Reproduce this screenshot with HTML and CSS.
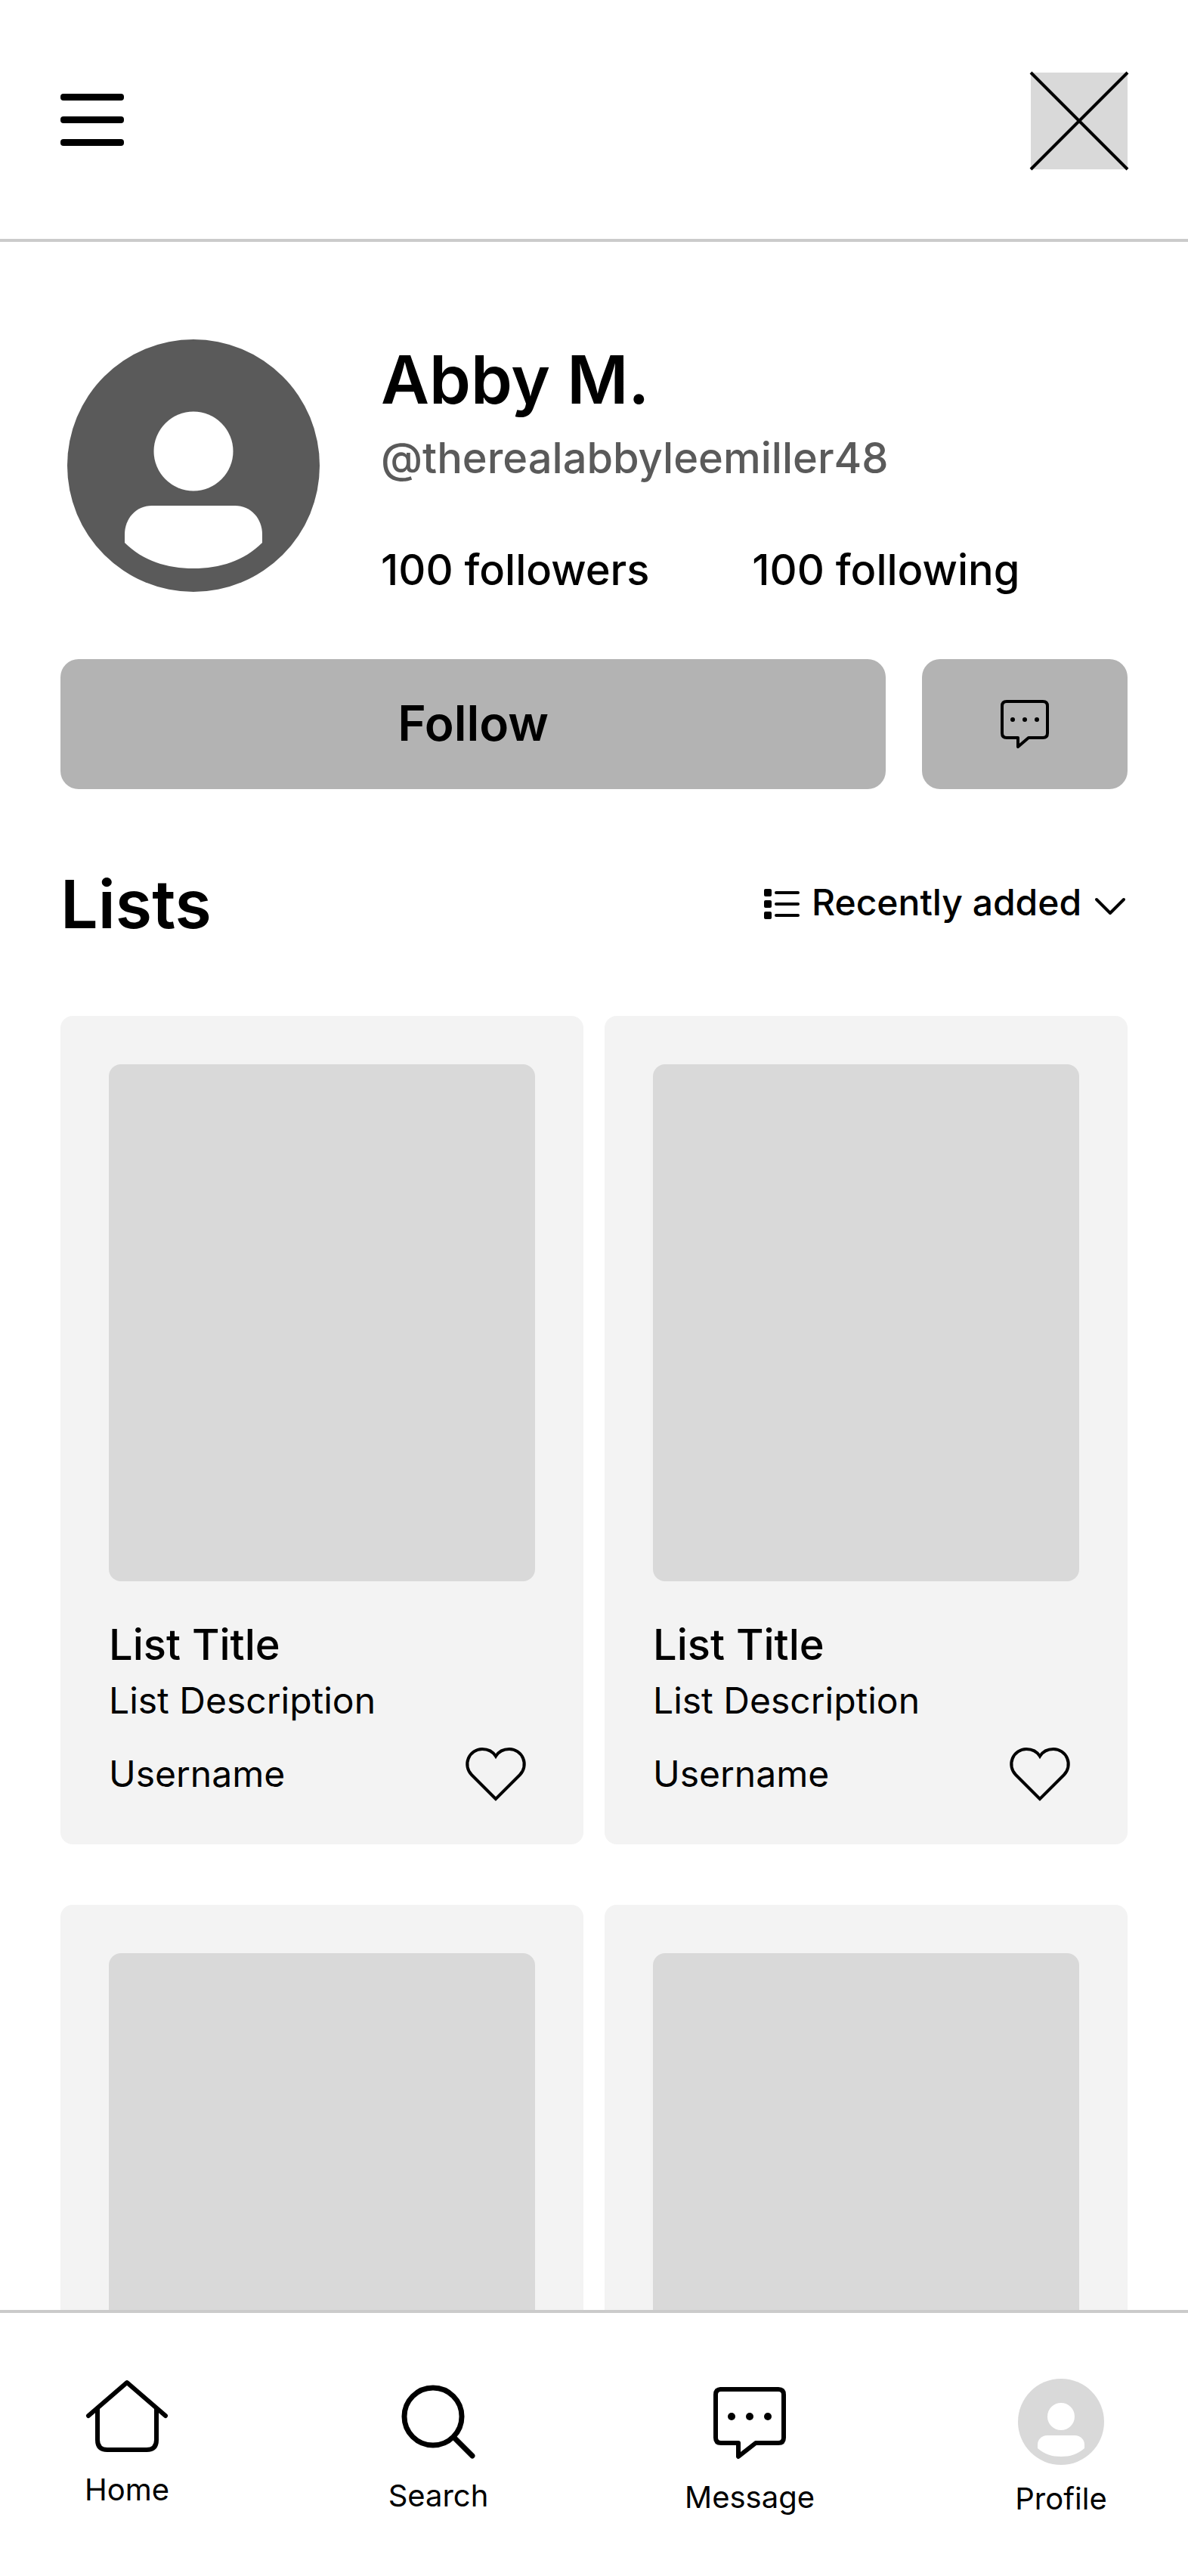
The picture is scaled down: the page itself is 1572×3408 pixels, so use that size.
FILE: index.html
```html
<!DOCTYPE html>
<html lang="en">
<head>
  <meta charset="UTF-8">
  <meta name="viewport" content="width=device-width, initial-scale=1.0">
  <title>Abby M.</title>
  <link rel="stylesheet" href="styles.css">
</head>
<body>
  <header class="topbar">
    <button class="menu-btn" aria-label="Open menu">
      <span></span>
      <span></span>
      <span></span>
    </button>
    <svg class="logo" viewBox="0 0 128 128" role="img" aria-label="Logo">
      <rect width="128" height="128" fill="#d9d9d9"/>
      <path d="M0 0L128 128M128 0L0 128" stroke="#000" stroke-width="4"/>
    </svg>
  </header>

  <main>
    <section class="profile">
      <svg class="avatar" viewBox="0 0 352 352" role="img" aria-label="Profile picture">
        <circle cx="176" cy="176" r="167" fill="#5a5a5a"/>
        <circle cx="176" cy="157" r="52.5" fill="#fff"/>
        <path d="M121 229H231C252 229 267 246 267 267V278C243 302 211 312 176 312C141 312 109 302 85 278V267C85 246 100 229 121 229Z" fill="#fff"/>
      </svg>
      <div class="info">
        <h1>Abby M.</h1>
        <p class="handle">@therealabbyleemiller48</p>
        <div class="stats">
          <a href="#followers">100 followers</a>
          <a href="#following">100 following</a>
        </div>
      </div>
    </section>

    <div class="actions">
      <button class="follow-btn">Follow</button>
      <button class="message-btn" aria-label="Send message">
        <svg width="64" height="64" viewBox="0 0 64 64" fill="none" stroke="#000" stroke-width="4">
          <path d="M8 2H56Q62 2 62 8V44Q62 50 56 50H37L23 62V50H8Q2 50 2 44V8Q2 2 8 2Z" stroke-linejoin="round"/>
          <g fill="#000" stroke="none">
            <circle cx="16" cy="26" r="3"/>
            <circle cx="32" cy="26" r="3"/>
            <circle cx="48" cy="26" r="3"/>
          </g>
        </svg>
      </button>
    </div>

    <section>
      <div class="lists-head">
        <h2>Lists</h2>
        <label class="sort">
          <svg width="48" height="48" viewBox="0 0 48 48">
            <rect x="1" y="4" width="10" height="10" rx="2"/>
            <rect x="1" y="19" width="10" height="10" rx="2"/>
            <rect x="1" y="34" width="10" height="10" rx="2"/>
            <path d="M17 9H46M17 24H46M17 39H46" stroke="#000" stroke-width="4" stroke-linecap="round"/>
          </svg>
          <select aria-label="Sort lists">
            <option>Recently added</option>
          </select>
          <svg width="44" height="48" viewBox="0 0 44 48">
            <path d="M3 18L21 36L39 18" fill="none" stroke="#000" stroke-width="4" stroke-linecap="round" stroke-linejoin="round"/>
          </svg>
        </label>
      </div>

      <div class="lists">
        <article class="card">
          <div class="cover"></div>
          <h3>List Title</h3>
          <p>List Description</p>
          <div class="card-foot">
            <span>Username</span>
            <button class="like-btn" aria-label="Like">
              <svg width="88" height="88" viewBox="0 0 88 88">
                <path d="M44 76L12 44A20 20 0 0 1 26 10C34 10 40 13 44 19.5C48 13 54 10 62 10A20 20 0 0 1 76 44Z" fill="none" stroke="#000" stroke-width="4"/>
              </svg>
            </button>
          </div>
        </article>
        <article class="card">
          <div class="cover"></div>
          <h3>List Title</h3>
          <p>List Description</p>
          <div class="card-foot">
            <span>Username</span>
            <button class="like-btn" aria-label="Like">
              <svg width="88" height="88" viewBox="0 0 88 88">
                <path d="M44 76L12 44A20 20 0 0 1 26 10C34 10 40 13 44 19.5C48 13 54 10 62 10A20 20 0 0 1 76 44Z" fill="none" stroke="#000" stroke-width="4"/>
              </svg>
            </button>
          </div>
        </article>
        <article class="card">
          <div class="cover"></div>
        </article>
        <article class="card">
          <div class="cover"></div>
        </article>
      </div>
    </section>
  </main>

  <nav class="tabbar">
    <a href="#home">
      <svg width="120" height="118" viewBox="0 0 120 118" fill="none" stroke="#000" stroke-width="6" stroke-linecap="round" stroke-linejoin="round">
        <path d="M9 56L60 12L111 56"/>
        <path d="M21 47V88Q21 101 34 101H86Q99 101 99 88V47"/>
      </svg>
      Home
    </a>
    <a href="#search">
      <svg width="120" height="126" viewBox="0 0 120 126" fill="none" stroke="#000" stroke-width="7" stroke-linecap="round">
        <circle cx="53" cy="57" r="38"/>
        <path d="M81 85L105 109"/>
      </svg>
      Search
    </a>
    <a href="#message">
      <svg width="120" height="128" viewBox="0 0 120 128" fill="none" stroke="#000" stroke-width="6">
        <path d="M21 21H98Q105 21 105 28V85Q105 92 98 92H68L45 110V92H22Q15 92 15 85V28Q15 21 22 21Z" stroke-linejoin="round"/>
        <g fill="#000" stroke="none">
          <circle cx="36" cy="57" r="5"/>
          <circle cx="60" cy="57" r="5"/>
          <circle cx="84" cy="57" r="5"/>
        </g>
      </svg>
      Message
    </a>
    <a href="#profile">
      <svg width="120" height="130" viewBox="0 0 120 130">
        <circle cx="60" cy="64" r="57" fill="#d9d9d9"/>
        <circle cx="60" cy="57" r="18" fill="#fff"/>
        <path d="M42 82H78C86 82 91 88 91 94V99C82 107 72 110 60 110C48 110 38 107 29 99V94C29 88 34 82 42 82Z" fill="#fff"/>
      </svg>
      Profile
    </a>
  </nav>
</body>
</html>
```

FILE: styles.css
```css
* {
  box-sizing: border-box;
}
body {
  font-family: Inter, sans-serif;
  font-optical-sizing: none;
  margin: 0;
  height: 100vh;
  display: flex;
  flex-direction: column;
  background-color: #fff;
  color: #000;
}
h1, h2, h3, p {
  margin: 0;
}
a {
  color: inherit;
  text-decoration: none;
}
button, select {
  font-family: inherit;
  color: inherit;
  border: none;
  padding: 0;
  background: none;
  cursor: pointer;
}
svg {
  display: block;
  flex-shrink: 0;
}

/* Top bar */
.topbar {
  display: flex;
  justify-content: space-between;
  align-items: center;
  padding: 96px 80px 92px;
  border-bottom: 4px solid #cbcbcb;
}
.menu-btn {
  display: flex;
  flex-direction: column;
  gap: 21px;
  padding-bottom: 4px;
}
.menu-btn span {
  width: 84px;
  height: 9px;
  border-radius: 4px;
  background-color: #000;
}
.logo {
  width: 128px;
  height: 128px;
  overflow: visible;
}

/* The page scrolls between the two bars */
main {
  flex: 1;
  min-height: 0;
  overflow-y: auto;
  scrollbar-width: none;
  padding: 120px 80px 80px;
}

/* Profile */
.profile {
  display: flex;
  gap: 72px;
}
.avatar {
  width: 352px;
  height: 352px;
}
.info {
  padding-top: 8px;
}
h1 {
  font-size: 88px;
  line-height: 108px;
  font-weight: 600;
}
.handle {
  margin-top: 16px;
  font-size: 56px;
  line-height: 68px;
  font-weight: 500;
  color: #5a5a5a;
}
.stats {
  display: flex;
  gap: 136px;
  margin-top: 80px;
  font-size: 56px;
  line-height: 68px;
  font-weight: 500;
}
.actions {
  display: flex;
  gap: 48px;
  margin-top: 80px;
}
.actions button {
  height: 172px;
  border-radius: 24px;
  background-color: #b3b3b3;
}
.follow-btn {
  flex: 1;
  padding-bottom: 4px;
  font-size: 64px;
  font-weight: 600;
}
.message-btn {
  width: 272px;
  display: flex;
  justify-content: center;
  align-items: center;
}

/* Lists */
.lists-head {
  display: flex;
  justify-content: space-between;
  align-items: center;
  margin: 100px 0 96px;
}
h2 {
  font-size: 88px;
  line-height: 104px;
  font-weight: 600;
}
.sort {
  display: flex;
  align-items: center;
  gap: 16px;
}
.sort select {
  appearance: none;
  padding-bottom: 4px;
  font-size: 48px;
  line-height: 60px;
  font-weight: 500;
}
.lists {
  display: grid;
  grid-template-columns: 1fr 1fr;
  gap: 80px 28px;
}
.card {
  padding: 64px 64px 48px;
  border-radius: 16px;
  background-color: #f3f3f3;
}
.cover {
  aspect-ratio: 47 / 57;
  border-radius: 16px;
  background-color: #d9d9d9;
}
.card h3 {
  margin-top: 48px;
  font-size: 56px;
  line-height: 72px;
  font-weight: 500;
}
.card p {
  margin-top: 8px;
  font-size: 48px;
  line-height: 60px;
}
.card-foot {
  display: flex;
  justify-content: space-between;
  align-items: center;
  margin-top: 24px;
  padding-right: 8px;
  font-size: 48px;
}
.card-foot span {
  padding-bottom: 4px;
}

/* Bottom navigation */
.tabbar {
  display: flex;
  justify-content: space-between;
  padding: 80px 80px 78px;
  border-top: 4px solid #cbcbcb;
}
.tabbar a {
  width: 176px;
  display: flex;
  flex-direction: column;
  align-items: center;
  gap: 12px;
  font-size: 40px;
  line-height: 48px;
}
```
